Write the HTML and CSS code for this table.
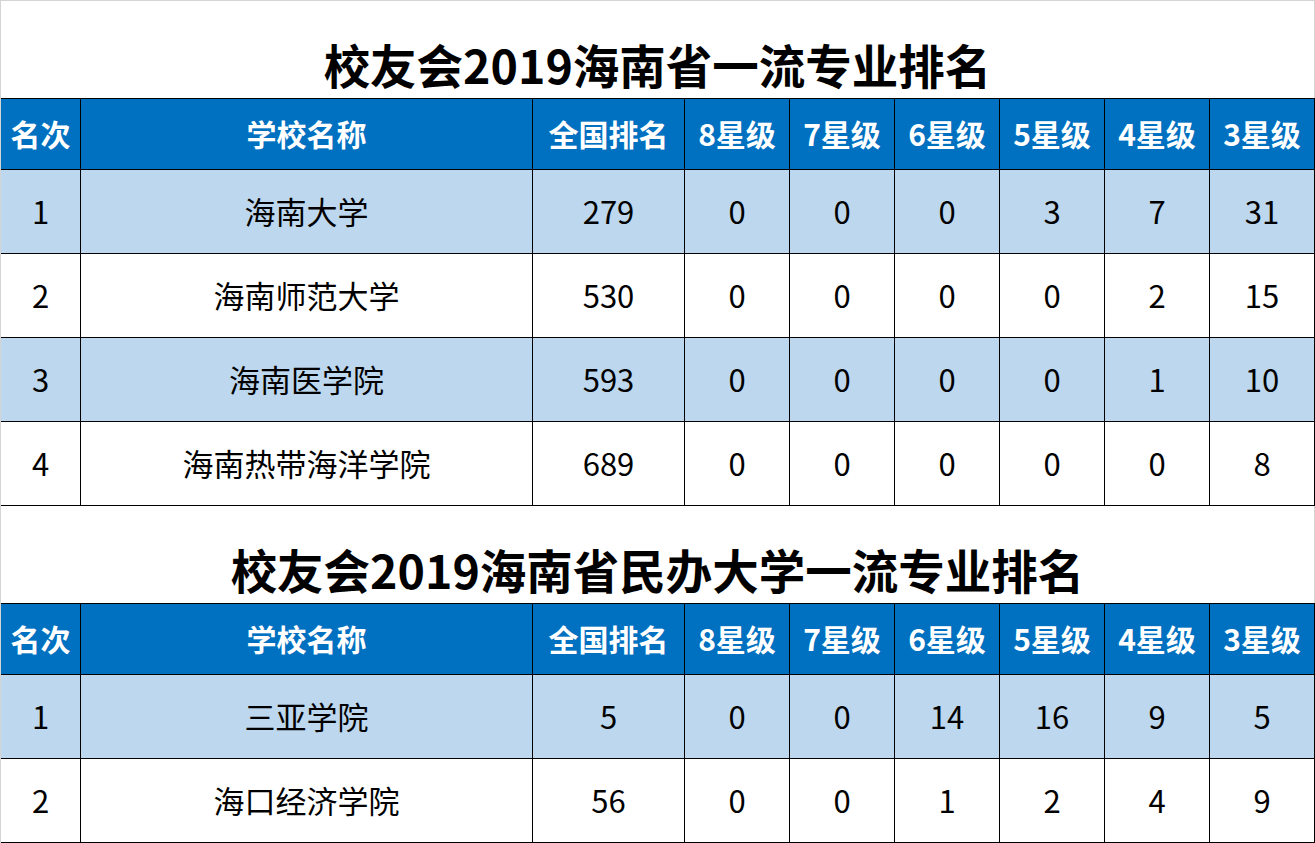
FILE: index.html
```html
<!DOCTYPE html>
<html lang="zh-CN">
<head>
<meta charset="utf-8">
<title>校友会2019海南省一流专业排名</title>
<link rel="stylesheet" href="styles.css">
</head>
<body>
<div class="sheet">
  <div class="title first">校友会2019海南省一流专业排名</div>
  <div class="grid">
    <div class="cell head">名次</div><div class="cell head">学校名称</div><div class="cell head">全国排名</div><div class="cell head">8星级</div><div class="cell head">7星级</div><div class="cell head">6星级</div><div class="cell head">5星级</div><div class="cell head">4星级</div><div class="cell head">3星级</div>
    <div class="cell alt">1</div><div class="cell alt">海南大学</div><div class="cell alt">279</div><div class="cell alt">0</div><div class="cell alt">0</div><div class="cell alt">0</div><div class="cell alt">3</div><div class="cell alt">7</div><div class="cell alt">31</div>
    <div class="cell">2</div><div class="cell">海南师范大学</div><div class="cell">530</div><div class="cell">0</div><div class="cell">0</div><div class="cell">0</div><div class="cell">0</div><div class="cell">2</div><div class="cell">15</div>
    <div class="cell alt">3</div><div class="cell alt">海南医学院</div><div class="cell alt">593</div><div class="cell alt">0</div><div class="cell alt">0</div><div class="cell alt">0</div><div class="cell alt">0</div><div class="cell alt">1</div><div class="cell alt">10</div>
    <div class="cell">4</div><div class="cell">海南热带海洋学院</div><div class="cell">689</div><div class="cell">0</div><div class="cell">0</div><div class="cell">0</div><div class="cell">0</div><div class="cell">0</div><div class="cell">8</div>
  </div>
  <div class="title second">校友会2019海南省民办大学一流专业排名</div>
  <div class="grid">
    <div class="cell head">名次</div><div class="cell head">学校名称</div><div class="cell head">全国排名</div><div class="cell head">8星级</div><div class="cell head">7星级</div><div class="cell head">6星级</div><div class="cell head">5星级</div><div class="cell head">4星级</div><div class="cell head">3星级</div>
    <div class="cell alt">1</div><div class="cell alt">三亚学院</div><div class="cell alt">5</div><div class="cell alt">0</div><div class="cell alt">0</div><div class="cell alt">14</div><div class="cell alt">16</div><div class="cell alt">9</div><div class="cell alt">5</div>
    <div class="cell">2</div><div class="cell">海口经济学院</div><div class="cell">56</div><div class="cell">0</div><div class="cell">0</div><div class="cell">1</div><div class="cell">2</div><div class="cell">4</div><div class="cell">9</div>
  </div>
</div>
</body>
</html>
```

FILE: styles.css
```css
* { box-sizing: border-box; }
html, body { margin: 0; padding: 0; background: #ffffff; }
body {
  font-family: "Noto Sans CJK SC", "Noto Sans", sans-serif;
  color: #000000;
}
.sheet {
  width: 1315px;
  height: 843px;
  overflow: hidden;
  border-left: 1px solid #d4d4d4;
}
.title {
  display: flex;
  align-items: flex-end;
  justify-content: center;
  font-weight: 700;
  font-size: 46.5px;
  line-height: 48px;
  border-right: 1px solid #d4d4d4;
  width: 1314px;
  padding-bottom: 10px;
}
.title.first { height: 98px; border-top: 1px solid #d4d4d4; }
.title.second { height: 97px; }
.grid {
  display: grid;
  grid-template-columns: 80px 452px 152px repeat(6, 105px);
  width: 1314px;
}
.cell {
  height: 84px;
  display: flex;
  align-items: center;
  justify-content: center;
  border-right: 1px solid #000;
  border-bottom: 1px solid #000;
  font-size: 31px;
  padding-bottom: 2px;
  background: #ffffff;
  white-space: nowrap;
}
.cell.alt { background: #bdd7ee; }
.cell.head {
  height: 72px;
  border-top: 1px solid #000;
  background: #0070c0;
  color: #ffffff;
  font-weight: 700;
  font-size: 30px;
  padding-bottom: 3px;
}
```
